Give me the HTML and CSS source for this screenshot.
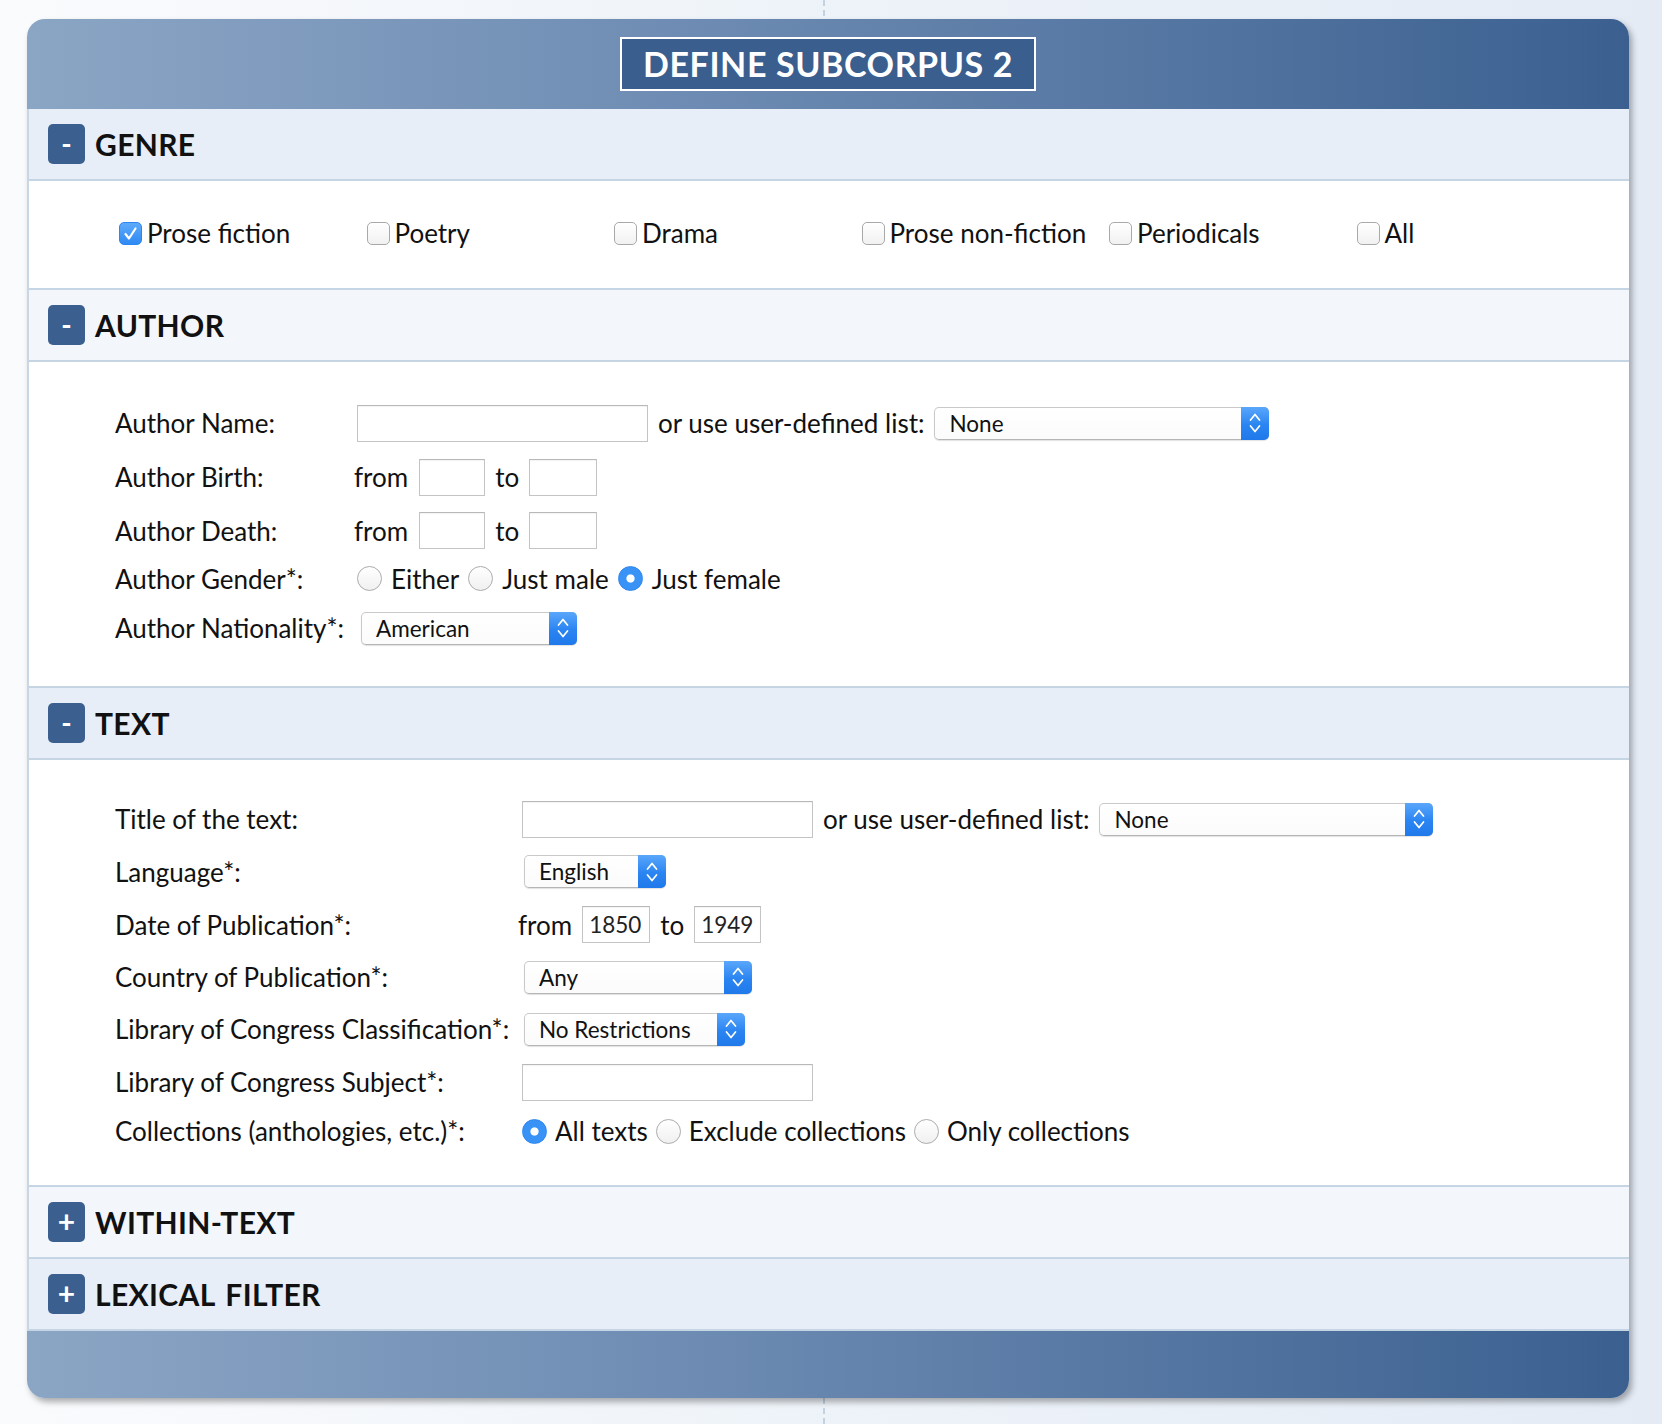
FILE: index.html
```html
<!DOCTYPE html>
<html lang="en">
<head>
<meta charset="utf-8">
<title>Define Subcorpus 2</title>
<link rel="stylesheet" href="styles.css">
</head>
<body>
<div class="divider"></div>
<div class="panel">
  <div class="panel-head">
    <div class="title">DEFINE SUBCORPUS 2</div>
  </div>

  <div class="sec-head dark">
    <span class="tog">-</span><span class="sec-title">GENRE</span>
  </div>
  <div class="sec-body genre">
    <label class="gitem"><span class="cb on"><svg viewBox="0 0 23 23" width="23" height="23"><path d="M6.5 12 L10 16.5 L16.5 6.5" fill="none" stroke="#fff" stroke-width="2.2" stroke-linecap="round" stroke-linejoin="round"/></svg></span><span class="lbl">Prose fiction</span></label>
    <label class="gitem"><span class="cb"></span><span class="lbl">Poetry</span></label>
    <label class="gitem"><span class="cb"></span><span class="lbl">Drama</span></label>
    <label class="gitem"><span class="cb"></span><span class="lbl">Prose non-fiction</span></label>
    <label class="gitem"><span class="cb"></span><span class="lbl">Periodicals</span></label>
    <label class="gitem"><span class="cb"></span><span class="lbl">All</span></label>
  </div>

  <div class="sec-head light">
    <span class="tog">-</span><span class="sec-title">AUTHOR</span>
  </div>
  <div class="sec-body author">
    <div class="row h54">
      <span class="lbl lw-a">Author Name:</span>
      <div class="ctl">
        <input class="tin w291 ml2" type="text">
        <span class="lbl">or use user-defined list:</span>
        <span class="sel w335"><span class="sel-val">None</span><span class="sel-btn"><svg viewBox="0 0 14 26" width="14" height="26"><path d="M2.5 10 L7 4.5 L11.5 10 M2.5 16 L7 21.5 L11.5 16" fill="none" stroke="#fff" stroke-width="1.7" stroke-linecap="round" stroke-linejoin="round"/></svg></span></span>
      </div>
    </div>
    <div class="row h54">
      <span class="lbl lw-a">Author Birth:</span>
      <div class="ctl">
        <span class="lbl mln3">from</span>
        <input class="tin w66" type="text">
        <span class="lbl">to</span>
        <input class="tin w68" type="text">
      </div>
    </div>
    <div class="row h53">
      <span class="lbl lw-a">Author Death:</span>
      <div class="ctl">
        <span class="lbl mln3">from</span>
        <input class="tin w66" type="text">
        <span class="lbl">to</span>
        <input class="tin w68" type="text">
      </div>
    </div>
    <div class="row h43">
      <span class="lbl lw-a">Author Gender*:</span>
      <div class="ctl radios">
        <span class="rb"></span><span class="lbl">Either</span>
        <span class="rb"></span><span class="lbl">Just male</span>
        <span class="rb on"></span><span class="lbl">Just female</span>
      </div>
    </div>
    <div class="row h56">
      <span class="lbl lw-a">Author Nationality*:</span>
      <div class="ctl">
        <span class="sel w216 ml4"><span class="sel-val">American</span><span class="sel-btn"><svg viewBox="0 0 14 26" width="14" height="26"><path d="M2.5 10 L7 4.5 L11.5 10 M2.5 16 L7 21.5 L11.5 16" fill="none" stroke="#fff" stroke-width="1.7" stroke-linecap="round" stroke-linejoin="round"/></svg></span></span>
      </div>
    </div>
  </div>

  <div class="sec-head dark">
    <span class="tog">-</span><span class="sec-title">TEXT</span>
  </div>
  <div class="sec-body text">
    <div class="row h52">
      <span class="lbl lw-t">Title of the text:</span>
      <div class="ctl">
        <input class="tin w291" type="text">
        <span class="lbl">or use user-defined list:</span>
        <span class="sel w334"><span class="sel-val">None</span><span class="sel-btn"><svg viewBox="0 0 14 26" width="14" height="26"><path d="M2.5 10 L7 4.5 L11.5 10 M2.5 16 L7 21.5 L11.5 16" fill="none" stroke="#fff" stroke-width="1.7" stroke-linecap="round" stroke-linejoin="round"/></svg></span></span>
      </div>
    </div>
    <div class="row h53">
      <span class="lbl lw-t">Language*:</span>
      <div class="ctl">
        <span class="sel w142 ml2"><span class="sel-val">English</span><span class="sel-btn"><svg viewBox="0 0 14 26" width="14" height="26"><path d="M2.5 10 L7 4.5 L11.5 10 M2.5 16 L7 21.5 L11.5 16" fill="none" stroke="#fff" stroke-width="1.7" stroke-linecap="round" stroke-linejoin="round"/></svg></span></span>
      </div>
    </div>
    <div class="row h53">
      <span class="lbl lw-t">Date of Publication*:</span>
      <div class="ctl">
        <span class="lbl mln4">from</span>
        <input class="tin w68" type="text" value="1850">
        <span class="lbl">to</span>
        <input class="tin w67" type="text" value="1949">
      </div>
    </div>
    <div class="row h52">
      <span class="lbl lw-t">Country of Publication*:</span>
      <div class="ctl">
        <span class="sel w228 ml2"><span class="sel-val">Any</span><span class="sel-btn"><svg viewBox="0 0 14 26" width="14" height="26"><path d="M2.5 10 L7 4.5 L11.5 10 M2.5 16 L7 21.5 L11.5 16" fill="none" stroke="#fff" stroke-width="1.7" stroke-linecap="round" stroke-linejoin="round"/></svg></span></span>
      </div>
    </div>
    <div class="row h52">
      <span class="lbl lw-t">Library of Congress Classification*:</span>
      <div class="ctl">
        <span class="sel w221 ml2"><span class="sel-val">No Restrictions</span><span class="sel-btn"><svg viewBox="0 0 14 26" width="14" height="26"><path d="M2.5 10 L7 4.5 L11.5 10 M2.5 16 L7 21.5 L11.5 16" fill="none" stroke="#fff" stroke-width="1.7" stroke-linecap="round" stroke-linejoin="round"/></svg></span></span>
      </div>
    </div>
    <div class="row h54">
      <span class="lbl lw-t">Library of Congress Subject*:</span>
      <div class="ctl">
        <input class="tin w291" type="text">
      </div>
    </div>
    <div class="row h44">
      <span class="lbl lw-t">Collections (anthologies, etc.)*:</span>
      <div class="ctl radios tight">
        <span class="rb on"></span><span class="lbl">All texts</span>
        <span class="rb"></span><span class="lbl">Exclude collections</span>
        <span class="rb"></span><span class="lbl">Only collections</span>
      </div>
    </div>
  </div>

  <div class="sec-head light">
    <span class="tog plus">+</span><span class="sec-title">WITHIN-TEXT</span>
  </div>
  <div class="sec-head dark">
    <span class="tog plus">+</span><span class="sec-title">LEXICAL FILTER</span>
  </div>

  <div class="panel-foot"></div>
</div>
</body>
</html>
```

FILE: styles.css
```css
html, body {
  margin: 0;
  padding: 0;
}

body {
  position: relative;
  min-height: 1424px;
  background: linear-gradient(90deg, #fafbfd 0%, #eef3f9 50%, #e4ebf5 100%);
  font-family: Lato, "Open Sans", "Noto Sans", sans-serif;
  color: #111;
  overflow: hidden;
}

.divider {
  position: absolute;
  left: 823px;
  top: 0;
  bottom: 0;
  border-left: 2px dashed #c3d2e3;
  z-index: 0;
}

.panel {
  position: relative;
  z-index: 1;
  width: 1602px;
  margin: 19px 0 0 27px;
  border-radius: 18px;
  background: #fff;
  box-shadow: 3px 4px 6px rgba(0, 0, 0, 0.32);
}

.panel-head {
  height: 90px;
  border-radius: 18px 18px 0 0;
  background: linear-gradient(90deg, #8ba5c4 0%, #6f8db4 40%, #3b6090 100%);
  display: flex;
  align-items: center;
  justify-content: center;
}

.title {
  box-sizing: border-box;
  height: 54px;
  border: 2px solid #fff;
  background: #3a5f8f;
  color: #fff;
  font-weight: 700;
  font-size: 34px;
  line-height: 50px;
  letter-spacing: 0.6px;
  padding: 0 21px;
  white-space: nowrap;
}

.panel-foot {
  height: 67px;
  border-radius: 0 0 18px 18px;
  background: linear-gradient(90deg, #8ba5c4 0%, #6f8db4 40%, #3b6090 100%);
}

.sec-head {
  box-sizing: border-box;
  height: 72px;
  border-bottom: 2px solid #c6d5e3;
  border-left: 2px solid #c9d7e5;
  display: flex;
  align-items: center;
  padding-left: 19px;
  gap: 10px;
}

.sec-head.dark { background: #e7eef7; }
.sec-head.light { background: #f3f6fa; }

.tog {
  box-sizing: border-box;
  width: 37px;
  height: 40px;
  border-radius: 5px;
  background: #3b6090;
  color: #fff;
  font-weight: 700;
  font-size: 28px;
  line-height: 38px;
  text-align: center;
}

.tog.plus {
  font-size: 30px;
  line-height: 38px;
}

.sec-title {
  font-weight: 700;
  font-size: 30px;
  color: #111;
  letter-spacing: 0.35px;
  word-spacing: 3px;
}

.sec-body {
  box-sizing: border-box;
  border-bottom: 2px solid #c6d5e3;
  border-left: 2px solid #c9d7e5;
  background: #fff;
}

.lbl {
  font-size: 26px;
  white-space: nowrap;
  color: #111;
}

/* Genre */
.genre {
  height: 109px;
  display: grid;
  grid-template-columns: repeat(6, 247.5px);
  align-items: center;
  padding: 0 0 4px 90px;
}

.gitem {
  display: flex;
  align-items: center;
  gap: 5px;
}

.cb {
  box-sizing: border-box;
  width: 23px;
  height: 23px;
  border: 1px solid #a9a9a9;
  border-radius: 5px;
  background: linear-gradient(#ffffff, #f1f1f1);
  display: inline-block;
  position: relative;
  top: 1px;
}

.cb.on {
  border-color: #2d86ef;
  background: linear-gradient(#5eabfb, #2f8af3);
}

.cb svg {
  display: block;
  margin: -1px;
}

/* rows */
.author {
  height: 326px;
  padding: 34px 0 0 86px;
}

.text {
  height: 427px;
  padding: 33px 0 0 86px;
}

.row {
  display: flex;
  align-items: center;
}

.h43 { height: 43px; }
.h44 { height: 44px; }
.h52 { height: 52px; }
.h53 { height: 53px; }
.h54 { height: 54px; }
.h56 { height: 56px; }

.lw-a { flex: 0 0 242px; }
.lw-t { flex: 0 0 407px; }

.ctl {
  display: flex;
  align-items: center;
  gap: 10px;
}

.ctl.radios { gap: 9px; }
.ctl.radios.tight { gap: 8px; }

.ml2 { margin-left: 2px; }
.ml4 { margin-left: 4px; }
.mln3 { margin-left: -3px; margin-right: 1px; }
.mln4 { margin-left: -4px; margin-right: 0; }

.tin {
  box-sizing: border-box;
  height: 37px;
  border: 1px solid #c4c4c4;
  border-top-color: #b8b8b8;
  background: #fff;
  box-shadow: inset 0 1px 1px rgba(0, 0, 0, 0.05);
  font-family: Lato, "Open Sans", sans-serif;
  font-size: 22.5px;
  color: #222;
  padding: 0 6px;
  margin: 0;
  outline: none;
}

.w291 { width: 291px; }
.w66 { width: 66px; }
.w67 { width: 67px; }
.w68 { width: 68px; }

.sel {
  box-sizing: border-box;
  height: 33px;
  display: flex;
  align-items: stretch;
  border: 1px solid #c9c9c9;
  border-bottom-color: #b5b5b5;
  border-radius: 5px;
  background: linear-gradient(#ffffff, #fbfbfb);
  box-shadow: 0 1px 1px rgba(0, 0, 0, 0.12);
}

.sel-val {
  flex: 1;
  font-size: 22.5px;
  line-height: 31px;
  padding-left: 14px;
  color: #111;
  white-space: nowrap;
}

.sel-btn {
  width: 28px;
  margin: -1px -1px -1px 0;
  border-radius: 0 5px 5px 0;
  background: linear-gradient(#5aa7fb, #2a84f1 55%, #1f79ea);
  display: flex;
  align-items: center;
  justify-content: center;
}

.sel-btn svg { display: block; }

.w335 { width: 335px; }
.w334 { width: 334px; }
.w216 { width: 216px; }
.w142 { width: 142px; }
.w228 { width: 228px; }
.w221 { width: 221px; }

.rb {
  box-sizing: border-box;
  width: 25px;
  height: 25px;
  border-radius: 50%;
  border: 1px solid #acacac;
  background: linear-gradient(#ffffff, #f0f0f0);
  display: inline-block;
  flex: 0 0 auto;
}

.rb.on {
  border-color: #2b85ef;
  background: radial-gradient(circle at center, #ffffff 0 3.6px, #3993f7 4.6px);
}
```
